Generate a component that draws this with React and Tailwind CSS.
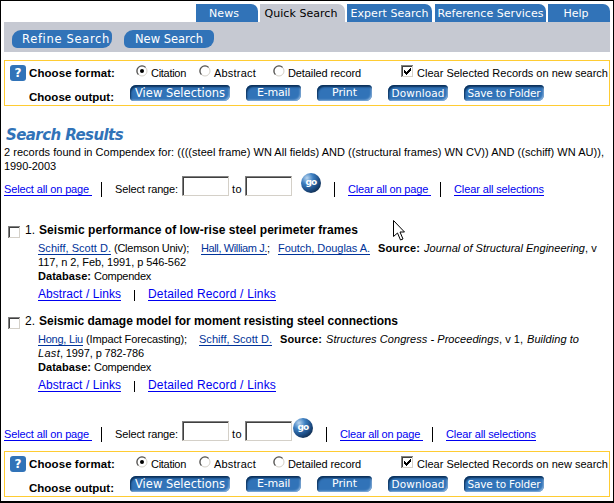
import { useLayoutEffect, useRef, useState } from "react";
import clsx from "clsx";

// One run of text, tracked so that it fills the width given in its classes.
function Fit({ className, children }) {
  const outer = useRef(null);
  const inner = useRef(null);
  const [spacing, setSpacing] = useState(0);
  useLayoutEffect(() => {
    const room = outer.current.getBoundingClientRect().width;
    const natural = inner.current.getBoundingClientRect().width;
    setSpacing((room - natural) / inner.current.textContent.length);
  }, []);
  return (
    <span ref={outer} className={clsx("inline-block shrink-0 whitespace-pre", className)}>
      <span ref={inner} style={{ letterSpacing: spacing }}>{children}</span>
    </span>
  );
}

const link = "text-[#0000f0] underline decoration-1 underline-offset-2";
const author = "text-[#003399] underline decoration-1 underline-offset-2";
const verdana = "font-['DejaVu_Sans',sans-serif]";

function Tab({ className, text, active }) {
  return (
    <div
      className={clsx(
        "flex h-[18px] shrink-0 justify-center rounded-tr-[7px] text-[11px] leading-[19px]",
        verdana,
        active ? "bg-[#c6c9d2] text-black" : "bg-[#3173b8] text-white",
        className,
      )}
    >
      <Fit className={text.width}>{text.label}</Fit>
    </div>
  );
}

function Pill({ className, width, children }) {
  return (
    <button
      className={clsx(
        "flex h-[18px] justify-center rounded-tl-[9px] rounded-tr-[5px] rounded-br-[9px] rounded-bl-[5px] bg-[#3173b8] text-[11.5px] leading-[18px] text-white",
        verdana,
        className,
      )}
    >
      <Fit className={width}>{children}</Fit>
    </button>
  );
}

function OutputButton({ className, width, children }) {
  return (
    <button
      className={clsx(
        "flex h-4 shrink-0 justify-center rounded-tl-[6px] rounded-tr-[4px] rounded-br-[6px] rounded-bl-[4px] bg-[#3173b8] leading-[16px] text-white shadow-[inset_1px_2px_2px_#0b2f57,inset_-1px_-1px_2px_#8db5dd]",
        verdana,
        className,
      )}
    >
      <Fit className={width}>{children}</Fit>
    </button>
  );
}

function Radio({ className, checked }) {
  return (
    <svg className={clsx("h-3 w-3 shrink-0", className)} viewBox="0 0 12 12">
      <circle cx="6" cy="6" r="5" fill="#fff" stroke="#d4d0c8" />
      <path d="M2.4 9.6A5 5 0 0 1 9.6 2.4" fill="none" stroke="#555" strokeWidth="1.3" />
      {checked && <circle cx="6" cy="6" r="2" fill="#000" />}
    </svg>
  );
}

function Check({ className, checked }) {
  return (
    <svg className={clsx("h-3 w-3 shrink-0", className)} viewBox="0 0 12 12" shapeRendering="crispEdges">
      <rect width="12" height="12" fill="#d4d0c8" />
      <path d="M0 0H12V1H1V12H0Z" fill="#808080" />
      <path d="M1 1H11V2H2V11H1Z" fill="#404040" />
      <rect x="2" y="2" width="9" height="9" fill="#fff" />
      {checked && <path d="M3 5h1v1h1v1h1v-1h1v-1h1v-1h1v-1h1v3h-1v1h-1v1h-1v1h-1v1h-1v-1h-1v-1h-1z" fill="#000" />}
    </svg>
  );
}

function FormatPanel() {
  return (
    <section className="ml-[3px] h-[46px] w-[606px] border border-[#ffcc33]">
      <div className="flex h-[22px] pt-1">
        <div className="ml-[5px] flex h-4 w-4 shrink-0 items-center justify-center rounded-[3px] bg-[#3173b8] font-['DejaVu_Sans',sans-serif] text-[12px] leading-4 font-bold text-white">
          ?
        </div>
        <Fit className="mt-px ml-[3px] w-[86px] text-[11.5px] leading-[14px] font-bold">Choose format:</Fit>
        <Radio className="ml-[21px]" checked />
        <Fit className="mt-px ml-[3px] w-[35px]">Citation</Fit>
        <Radio className="ml-[13px]" />
        <Fit className="mt-px ml-[3px] w-[42px]">Abstract</Fit>
        <Radio className="ml-[17px]" />
        <Fit className="mt-px ml-[3px] w-[73px]">Detailed record</Fit>
        <Check className="ml-[40px]" checked />
        <Fit className="mt-px ml-[4px] w-[191px]">Clear Selected Records on new search</Fit>
      </div>
      <div className="flex pt-[2px]">
        <Fit className="mt-[5px] ml-6 w-[85px] text-[11.5px] leading-[14px] font-bold">Choose output:</Fit>
        <OutputButton className="ml-4 w-[100px] text-[11.5px]" width="w-[90px]">View Selections</OutputButton>
        <OutputButton className="ml-4 w-[55px] text-[11px]" width="w-[33px]">E-mail</OutputButton>
        <OutputButton className="ml-4 w-[55px] text-[11px]" width="w-[25px]">Print</OutputButton>
        <OutputButton className="ml-4 w-[60px] text-[10.5px]" width="w-[53px]">Download</OutputButton>
        <OutputButton className="ml-4 w-[80px] text-[10.5px]" width="w-[73px]">Save to Folder</OutputButton>
      </div>
    </section>
  );
}

function GoButton({ className }) {
  return (
    <button
      className={clsx(
        "flex h-5 w-5 shrink-0 justify-center rounded-full bg-[radial-gradient(circle_at_30%_25%,#b8d4ee_0%,#3d7fc1_30%,#1d4d85_60%,#071526_95%)] text-[9px] leading-[18px] font-bold text-white",
        verdana,
        className,
      )}
    >
      <Fit className="w-[11px]">go</Fit>
    </button>
  );
}

const field =
  "h-5 w-[47px] shrink-0 border border-t-[#808080] border-l-[#808080] border-r-[#d4d0c8] border-b-[#d4d0c8] bg-white shadow-[inset_1px_1px_0_#404040]";

function RangeRow({ goGap, barGap }) {
  return (
    <div className="ml-[3px] flex h-6">
      <Fit className={clsx("mt-[9px] w-[88px]", link)}>{"Select all on page "}</Fit>
      <i className="mt-[9px] ml-[9px] h-[15px] w-px bg-black" />
      <Fit className="mt-[9px] ml-[13px] w-[63px]">Select range:</Fit>
      <input className={clsx("mt-[3px] ml-[4px]", field)} />
      <Fit className="mt-[9px] ml-[3px] w-[10px]">to</Fit>
      <input className={clsx("mt-[3px] ml-[3px]", field)} />
      <GoButton className={goGap} />
      <i className={clsx("mt-[9px] h-[15px] w-px bg-black", barGap)} />
      <Fit className={clsx("mt-[9px] ml-[13px] w-[83px]", link)}>{"Clear all on page "}</Fit>
      <i className="mt-[9px] ml-[9px] h-[15px] w-px bg-black" />
      <Fit className={clsx("mt-[9px] ml-[13px] w-[90px]", link)}>Clear all selections</Fit>
    </div>
  );
}

function Result({ number, title, titleWidth, children }) {
  return (
    <article className="ml-[7px] h-[91px]">
      <div className="flex h-[18px]">
        <Check className="mt-[3px]" />
        <Fit className="ml-[5px] w-[10px] text-[12px]">{number}</Fit>
        <Fit className={clsx("ml-[4px] text-[12px] font-bold", titleWidth)}>{title}</Fit>
      </div>
      <div className="ml-[30px]">
        {children}
        <div className="flex">
          <Fit className="w-[53px] font-bold">Database:</Fit>
          <Fit className="ml-[3px] w-[57px]">Compendex</Fit>
        </div>
        <div className="mt-[4px] flex text-[12px]">
          <Fit className={clsx("w-[83px]", link)}>Abstract / Links</Fit>
          <i className="mt-[3px] ml-[13px] h-[11px] w-px bg-black" />
          <Fit className={clsx("ml-[13px] w-[128px]", link)}>Detailed Record / Links</Fit>
        </div>
      </div>
    </article>
  );
}

export default function App() {
  return (
    <main className="relative h-[503px] w-[614px] overflow-hidden border border-b-2 border-black bg-white font-['Liberation_Sans',Arial,sans-serif] text-[11px] leading-[14px] text-black">
      <nav className="mt-[3px] ml-[195px] flex">
        <Tab className="w-[62px] pr-[6px]" text={{ label: "News", width: "w-[30px]" }} />
        <Tab className="ml-[2px] w-[85px] pr-[3px]" text={{ label: "Quick Search", width: "w-[73px]" }} active />
        <Tab className="ml-[2px] w-[85px]" text={{ label: "Expert Search", width: "w-[78px]" }} />
        <Tab className="ml-[3px] w-[111px]" text={{ label: "Reference Services", width: "w-[106px]" }} />
        <Tab className="ml-[2px] w-[62px] pr-[6px]" text={{ label: "Help", width: "w-[25px]" }} />
      </nav>
      <div className="ml-[3px] flex h-[30px] w-[606px] gap-3 bg-[#c6c9d2] pt-2 pl-2">
        <Pill className="w-[100px] pl-[8px]" width="w-[88px]">Refine Search</Pill>
        <Pill className="w-[90px]" width="w-[68px]">New Search</Pill>
      </div>
      <div className="mt-2">
        <FormatPanel />
      </div>
      <h1 className="mt-[19px] ml-[5px] h-[20px] font-['DejaVu_Sans',sans-serif] text-[15px] leading-[21px] font-bold text-[#3173b8] italic">
        <Fit className="w-[117px]">Search Results</Fit>
      </h1>
      <div className="ml-[3px] flex h-7 flex-col">
        <Fit className="w-[600px]">
          2 records found in Compendex for: ((((steel frame) WN All fields) AND ((structural frames) WN CV)) AND ((schiff) WN AU)),
        </Fit>
        <Fit className="w-[52px]">1990-2003</Fit>
      </div>
      <RangeRow goGap="ml-[9px]" barGap="ml-[13px]" />
      <div className="mt-[26px]">
        <Result number="1." title="Seismic performance of low-rise steel perimeter frames" titleWidth="w-[319px]">
          <div className="flex">
            <Fit className={clsx("w-[73px]", author)}>Schiff, Scott D.</Fit>
            <Fit className="ml-[3px] w-[75px]">(Clemson Univ);</Fit>
            <Fit className={clsx("ml-[12px] w-[66px]", author)}>Hall, William J.</Fit>
            <Fit className="w-[3px]">;</Fit>
            <Fit className={clsx("ml-[8px] w-[92px]", author)}>Foutch, Douglas A.</Fit>
            <Fit className="ml-[8px] w-[42px] font-bold">Source:</Fit>
            <Fit className="ml-[4px] w-[161px] italic">Journal of Structural Engineering</Fit>
            <Fit className="w-[12px]">, v</Fit>
          </div>
          <Fit className="block w-[148px]">117, n 2, Feb, 1991, p 546-562</Fit>
        </Result>
        <Result number="2." title="Seismic damage model for moment resisting steel connections" titleWidth="w-[359px]">
          <div className="flex">
            <Fit className={clsx("w-[45px]", author)}>Hong, Liu</Fit>
            <Fit className="ml-[3px] w-[101px]">(Impact Forecasting);</Fit>
            <Fit className={clsx("ml-[12px] w-[73px]", author)}>Schiff, Scott D.</Fit>
            <Fit className="ml-[8px] w-[42px] font-bold">Source:</Fit>
            <Fit className="ml-[4px] w-[173px] italic">Structures Congress - Proceedings</Fit>
            <Fit className="w-[24px]">, v 1,</Fit>
            <Fit className="ml-[4px] w-[52px] italic">Building to</Fit>
          </div>
          <div className="flex">
            <Fit className="w-[22px] italic">Last</Fit>
            <Fit className="w-[84px]">, 1997, p 782-786</Fit>
          </div>
        </Result>
      </div>
      <div className="mt-[13px]">
        <RangeRow goGap="ml-px" barGap="ml-[13px]" />
      </div>
      <div className="mt-[9px]">
        <FormatPanel />
      </div>
      {/* mouse pointer resting over the page */}
      <svg className="absolute top-[219px] left-[392px] h-[21px] w-[13px]" viewBox="0 0 13 21">
        <path d="M.5 .5V16.5L4.5 13L7.5 20L10 19L7 12H11.5Z" fill="#fff" stroke="#000" />
      </svg>
    </main>
  );
}
